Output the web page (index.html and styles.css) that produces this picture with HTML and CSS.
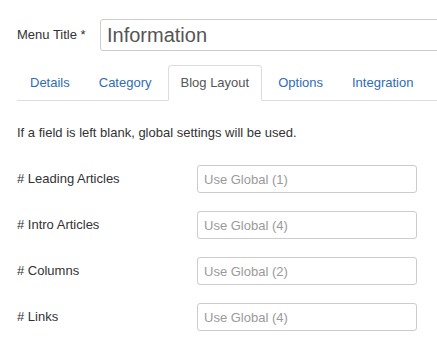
FILE: index.html
```html
<!DOCTYPE html>
<html>
<head>
<meta charset="utf-8">
<link rel="stylesheet" href="styles.css">
</head>
<body>
<div class="page">
  <div class="title-row">
    <label class="title-label">Menu Title *</label>
    <input class="title-input" type="text" value="Information">
  </div>
  <ul class="tabs">
    <li class="tab"><a>Details</a></li>
    <li class="tab"><a>Category</a></li>
    <li class="tab active"><a>Blog Layout</a></li>
    <li class="tab"><a>Options</a></li>
    <li class="tab"><a>Integration</a></li>
  </ul>
  <p class="note">If a field is left blank, global settings will be used.</p>
  <div class="fields">
    <div class="field"><label class="field-label"># Leading Articles</label><input class="field-input" type="text" placeholder="Use Global (1)"></div>
    <div class="field"><label class="field-label"># Intro Articles</label><input class="field-input" type="text" placeholder="Use Global (4)"></div>
    <div class="field"><label class="field-label"># Columns</label><input class="field-input" type="text" placeholder="Use Global (2)"></div>
    <div class="field"><label class="field-label"># Links</label><input class="field-input" type="text" placeholder="Use Global (4)"></div>
  </div>
</div>
</body>
</html>
```
FILE: styles.css
```css
html, body {
  margin: 0;
  padding: 0;
  overflow: hidden;
  background: #fff;
}
body {
  font-family: "Liberation Sans", Arial, sans-serif;
  font-size: 13px;
  line-height: 18px;
  color: #333;
}
.page {
  box-sizing: border-box;
  width: 437px;
  height: 341px;
  overflow: hidden;
  padding: 19px 0 0 17px;
}
.title-row {
  display: flex;
  align-items: center;
  width: 440px;
}
.title-label {
  width: 83px;
  flex: none;
}
.title-input {
  box-sizing: border-box;
  width: 350px;
  flex: none;
  height: 32px;
  margin: 0;
  padding: 0 6px;
  border: 1px solid #ccc;
  border-radius: 3px;
  font-family: "Liberation Sans", Arial, sans-serif;
  font-size: 20px;
  color: #555;
  outline: none;
}
.tabs {
  list-style: none;
  margin: 14px 0 0 0;
  padding: 0;
  display: flex;
  border-bottom: 1px solid #ddd;
}
.tab {
  margin-bottom: -1px;
  margin-right: 3px;
}
.tab a {
  display: block;
  padding: 8px 12px;
  line-height: 18px;
  border: 1px solid transparent;
  border-radius: 4px 4px 0 0;
  color: #2f6db3;
}
.tab.active a {
  color: #555;
  background: #fff;
  border-color: #ddd;
  border-bottom-color: #fff;
}
.note {
  margin: 23px 0 0 0;
}
.fields {
  display: flex;
  flex-direction: column;
  gap: 18px;
  margin-top: 23px;
}
.field {
  display: flex;
  align-items: center;
}
.field-label {
  width: 180px;
  flex: none;
}
.field-input {
  box-sizing: border-box;
  width: 220px;
  height: 28px;
  margin: 0;
  padding: 0 6px;
  border: 1px solid #ccc;
  border-radius: 3px;
  font-family: "Liberation Sans", Arial, sans-serif;
  font-size: 13px;
  color: #555;
  outline: none;
}
.field-input::placeholder {
  color: #9a9a9a;
}
```
